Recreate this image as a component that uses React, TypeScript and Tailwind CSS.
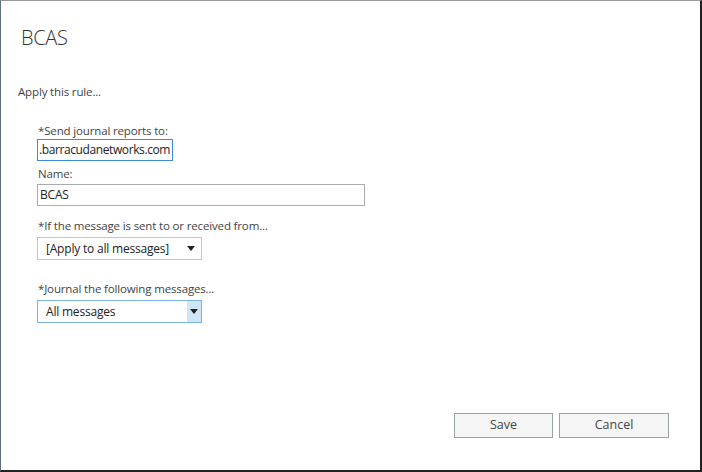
import React from "react";

const font = { fontFamily: '"Open Sans", "Segoe UI", sans-serif' };

function Arrow() {
  return (
    <svg width="8" height="5" viewBox="0 0 8 5" className="block">
      <path d="M0 0 H8 L4 5 Z" fill="#222" />
    </svg>
  );
}

const label = "text-[11.5px] leading-[16px] tracking-[-0.15px] text-[#444] pl-[1px]";
const field = "text-[12px] tracking-[-0.2px] text-[#222]";

export default function App() {
  return (
    <div
      className="w-[702px] h-[472px] bg-white border-t border-t-[#9a9a9a] border-l border-l-[#5c6f80] border-r-2 border-r-[#222] border-b-2 border-b-[#222] flex flex-col text-[#333]"
      style={font}
    >
      <div className="pl-[20px] pt-[24px] text-[20px] leading-[26px] font-light tracking-[-0.3px] text-[#333]">BCAS</div>
      <div className="pl-[17px] mt-[33px] text-[11.5px] leading-[16px] tracking-[-0.15px] text-[#444]">Apply this rule...</div>

      <div className="pl-[36px] mt-[23px] flex flex-col">
        <div className={label}>*Send journal reports to:</div>
        <div className="mt-0 w-[136px] h-[22px] border border-[#3c8ae0] overflow-hidden flex items-center pl-[1px] whitespace-nowrap text-[12px] tracking-[-0.4px] text-[#222]">
          .barracudanetworks.com
        </div>
        <div className={"mt-[5px] " + label}>Name:</div>
        <div className={"mt-[2px] w-[328px] h-[22px] border border-[#ababab] flex items-center pl-[2px] " + field}>
          BCAS
        </div>

        <div className={"mt-[12px] " + label}>*If the message is sent to or received from...</div>
        <div className={"mt-[3px] w-[165px] h-[23px] border border-[#c6c6c6] flex items-center pl-[8px] pr-[6px] " + field}>
          <span className="flex-1">[Apply to all messages]</span>
          <Arrow />
        </div>

        <div className={"mt-[21px] " + label}>*Journal the following messages...</div>
        <div className={"mt-[3px] w-[165px] h-[23px] border border-[#7db2e6] flex items-stretch " + field}>
          <span className="flex-1 flex items-center pl-[8px]">All messages</span>
          <span className="w-[14px] bg-[#cfe6f7] flex items-center justify-center">
            <Arrow />
          </span>
        </div>
      </div>

      <div className="flex-1" />
      <div className="flex justify-end gap-[6px] pr-[31px] pb-[32px]">
        <button className="w-[99px] h-[25px] bg-[#f5f5f5] border border-[#9aa2a2] text-[12.5px] text-[#444]">Save</button>
        <button className="w-[110px] h-[25px] bg-[#f5f5f5] border border-[#9aa2a2] text-[12.5px] text-[#444]">Cancel</button>
      </div>
    </div>
  );
}
